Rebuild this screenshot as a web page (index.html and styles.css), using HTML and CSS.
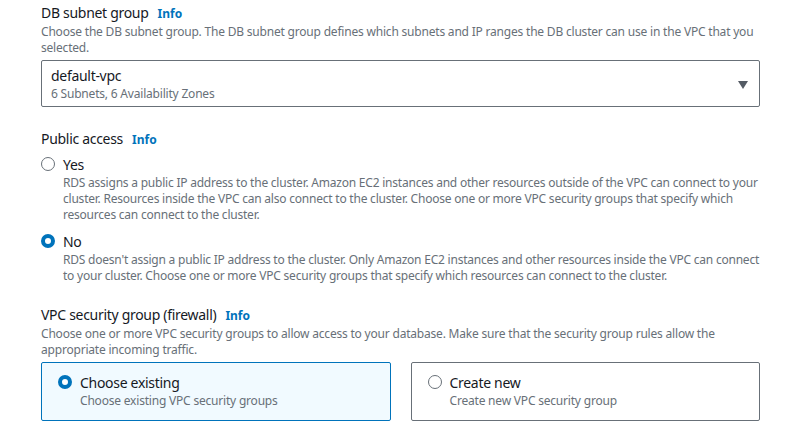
FILE: index.html
```html
<!DOCTYPE html>
<html>
<head>
<meta charset="utf-8">
<link rel="stylesheet" href="styles.css">
</head>
<body>
<div class="form">
  <div class="field">
    <div class="label-row"><span class="label">DB subnet group</span><span class="info">Info</span></div>
    <div class="desc">Choose the DB subnet group. The DB subnet group defines which subnets and IP ranges the DB cluster can use in the VPC that you selected.</div>
    <div class="select">
      <div class="select-text">
        <div class="select-value">default-vpc</div>
        <div class="select-sub">6 Subnets, 6 Availability Zones</div>
      </div>
      <svg class="caret" width="10" height="8" viewBox="0 0 10 8"><polygon points="0,0 10,0 5,8" fill="#545b64"/></svg>
    </div>
  </div>

  <div class="field field-access">
    <div class="label-row"><span class="label">Public access</span><span class="info">Info</span></div>
    <div class="radio-group">
      <div class="radio-item">
        <div class="radio-line"><span class="radio"></span><span class="radio-label">Yes</span></div>
        <div class="radio-desc">RDS assigns a public IP address to the cluster. Amazon EC2 instances and other resources outside of the VPC can connect to your cluster. Resources inside the VPC can also connect to the cluster. Choose one or more VPC security groups that specify which resources can connect to the cluster.</div>
      </div>
      <div class="radio-item">
        <div class="radio-line"><span class="radio checked"></span><span class="radio-label">No</span></div>
        <div class="radio-desc">RDS doesn't assign a public IP address to the cluster. Only Amazon EC2 instances and other resources inside the VPC can connect to your cluster. Choose one or more VPC security groups that specify which resources can connect to the cluster.</div>
      </div>
    </div>
  </div>

  <div class="field field-vpc">
    <div class="label-row"><span class="label">VPC security group (firewall)</span><span class="info">Info</span></div>
    <div class="desc">Choose one or more VPC security groups to allow access to your database. Make sure that the security group rules allow the appropriate incoming traffic.</div>
    <div class="tiles">
      <div class="tile selected">
        <div class="radio-line"><span class="radio checked"></span><span class="radio-label">Choose existing</span></div>
        <div class="tile-desc">Choose existing VPC security groups</div>
      </div>
      <div class="tile">
        <div class="radio-line"><span class="radio"></span><span class="radio-label">Create new</span></div>
        <div class="tile-desc">Create new VPC security group</div>
      </div>
    </div>
  </div>
</div>
</body>
</html>
```

FILE: styles.css
```css
* { box-sizing: border-box; }
body {
  margin: 0;
  background: #ffffff;
  font-family: "Noto Sans", "Open Sans", Arial, sans-serif;
  color: #16191f;
}
.form {
  width: 761px;
  padding: 2px 0 0 41px;
}
.label-row {
  display: flex;
  align-items: baseline;
  gap: 9px;
  height: 22px;
  line-height: 22px;
}
.label {
  font-size: 14px;
  letter-spacing: -0.3px;
  color: #16191f;
}
.info {
  font-size: 12px;
  font-weight: 700;
  color: #0073bb;
}
.desc {
  font-size: 12px;
  line-height: 16px;
  letter-spacing: -0.2px;
  color: #687078;
}
.select {
  margin-top: 4px;
  margin-right: 1px;
  height: 47px;
  border: 1px solid #687078;
  border-radius: 2px;
  display: flex;
  align-items: center;
  justify-content: space-between;
  padding: 0 11px 0 9px;
}
.select-value {
  font-size: 14px;
  line-height: 20px;
  letter-spacing: -0.3px;
  color: #16191f;
}
.select-sub {
  font-size: 12px;
  line-height: 16px;
  letter-spacing: -0.2px;
  color: #687078;
}
.caret { margin-top: 2px; }
.field-access { margin-top: 21px; }
.radio-group {
  margin-top: 3px;
  display: flex;
  flex-direction: column;
  gap: 7px;
}
.radio-line {
  display: flex;
  align-items: center;
  gap: 8px;
  height: 22px;
}
.radio {
  width: 14px;
  height: 14px;
  border-radius: 50%;
  border: 1.5px solid #687078;
  background: #fff;
  flex: none;
}
.radio.checked {
  border: 4px solid #0073bb;
}
.radio-label {
  font-size: 14px;
  letter-spacing: -0.3px;
  color: #16191f;
}
.radio-desc {
  padding-left: 22px;
  font-size: 12px;
  line-height: 16px;
  letter-spacing: -0.22px;
  color: #687078;
}
.field-vpc { margin-top: 20px; }
.tiles {
  margin-top: 4px;
  margin-right: 1px;
  display: grid;
  grid-template-columns: 1fr 1fr;
  gap: 20px;
}
.tile {
  border: 1px solid #687078;
  border-radius: 2px;
  padding: 8px 16px 11px;
  height: 59px;
}
.tile.selected {
  border-color: #0073bb;
  background: #f1faff;
}
.tile-desc {
  padding-left: 22px;
  font-size: 12px;
  line-height: 16px;
  letter-spacing: -0.2px;
  color: #687078;
}
```
